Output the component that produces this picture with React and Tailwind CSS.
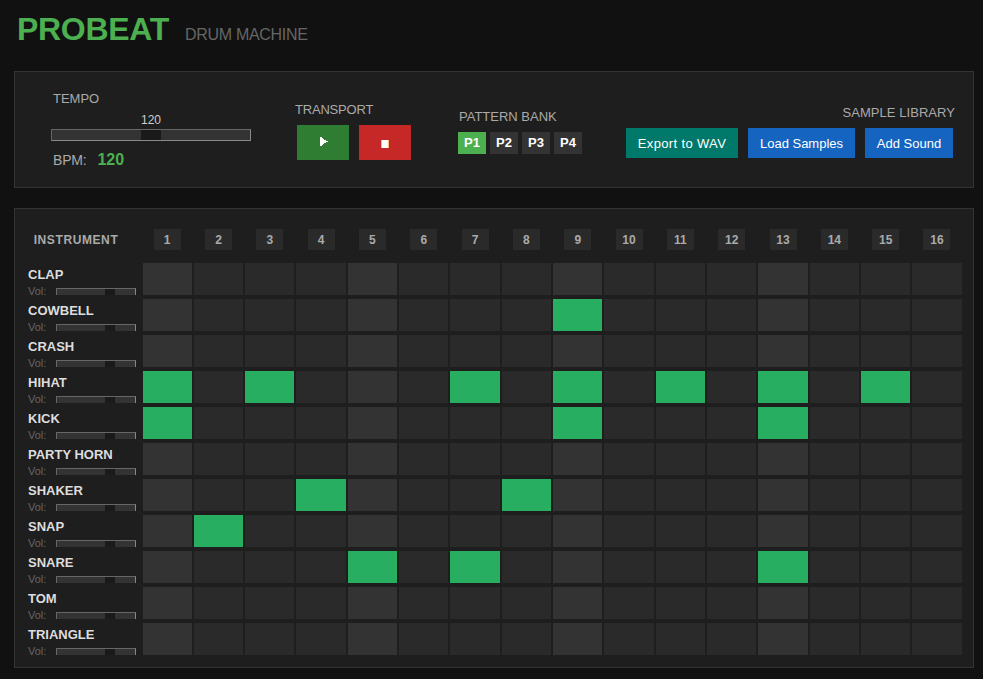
const rows = [
  ["CLAP", []],
  ["COWBELL", [9]],
  ["CRASH", []],
  ["HIHAT", [1, 3, 7, 9, 11, 13, 15]],
  ["KICK", [1, 9, 13]],
  ["PARTY HORN", []],
  ["SHAKER", [4, 8]],
  ["SNAP", [2]],
  ["SNARE", [5, 7, 13]],
  ["TOM", []],
  ["TRIANGLE", []],
];
const steps = Array.from({ length: 16 }, (_, i) => i + 1);

function Pad({ on, beat }) {
  const cls = on ? "bg-[#27ae60]" : beat ? "bg-[#333333]" : "bg-[#2a2a2a]";
  return <div className={`h-8 ${cls}`} />;
}

export default function App() {
  return (
    <div className="min-h-[679px] bg-[#111111] pl-[14px] font-['Liberation_Sans',Arial,sans-serif] overflow-hidden">
      <header className="flex h-[71px] items-baseline pt-[11px]">
        <h1 className="ml-[3px] text-[32px] leading-[37px] font-bold tracking-[-0.3px] text-[#4caf50]">PROBEAT</h1>
        <span className="ml-[16px] text-base tracking-[-0.3px] text-[#666666]">DRUM MACHINE</span>
      </header>

      <section className="flex h-[117px] w-[960px] items-center border border-[#333333] bg-[#1e1e1e] pl-[36px] pr-[20px]">
        <div className="w-[200px] shrink-0 pt-[4px]">
          <div className="ml-[2px] text-[13px] leading-[15px] text-[#aaaaaa]">TEMPO</div>
          <div className="mt-[7px] text-center text-xs leading-[14px] text-[#cccccc]">120</div>
          <div className="mt-[2px] flex h-3 border border-t-[#666666] border-l-[#666666] border-r-[#888888] border-b-[#888888] bg-[#333333] pl-[89px]">
            <div className="h-full w-5 bg-[#1a1a1a]" />
          </div>
          <div className="mt-[7px] ml-[2px] flex items-baseline">
            <span className="text-sm tracking-[-0.2px] text-[#aaaaaa]">BPM:</span>
            <span className="ml-[11px] text-base font-bold text-[#4caf50]">120</span>
          </div>
        </div>

        <div className="ml-[44px] shrink-0 pt-[3px]">
          <div className="text-[13px] leading-[15px] tracking-[-0.2px] text-[#aaaaaa]">TRANSPORT</div>
          <div className="ml-[2px] mt-[8px] flex gap-[10px]">
            <button className="flex h-[35px] w-[52px] items-center justify-center bg-[#2e7d32] text-white">
              <svg width="8" height="9" viewBox="0 0 8 9" shapeRendering="crispEdges" fill="currentColor" className="mb-[2px] ml-[1px]">
                <path d="M0 0h2v1h1v1h1v1h2v1h2v1H6v1H4v1H3v1H2v1H0z" />
              </svg>
            </button>
            <button className="flex h-[35px] w-[52px] items-center justify-center bg-[#c62828]">
              <span className="mt-[3px] block h-2 w-2 border-l border-r border-l-[#d8b0e8] border-r-[#f0c070] bg-white" />
            </button>
          </div>
        </div>

        <div className="ml-[47px] shrink-0 pt-[3px]">
          <div className="ml-[1px] text-[13px] leading-[15px] text-[#aaaaaa]">PATTERN BANK</div>
          <div className="mt-[8px] flex gap-1">
            {["P1", "P2", "P3", "P4"].map((p, i) => (
              <button key={p} className={`flex h-[22px] w-7 items-center justify-center text-[13px] font-bold text-white ${i === 0 ? "bg-[#4caf50]" : "bg-[#333333]"}`}>
                {p}
              </button>
            ))}
          </div>
        </div>

        <div className="ml-[44px] flex shrink-0 flex-col items-end pt-[3px]">
          <div className="mr-[-2px] text-[13px] leading-[15px] tracking-[0.05px] text-[#aaaaaa]">SAMPLE LIBRARY</div>
          <div className="mt-[8px] flex gap-[10px]">
            <button className="h-[30px] w-[112px] bg-[#00796b] pt-[2px] text-[13px] tracking-[0.35px] text-white">Export to WAV</button>
            <button className="h-[30px] w-[107px] bg-[#1565c0] pt-[2px] text-[13px] text-white">Load Samples</button>
            <button className="h-[30px] w-[88px] bg-[#1565c0] pt-[2px] text-[13px] text-white">Add Sound</button>
          </div>
        </div>
      </section>

      <section className="mt-5 h-[460px] w-[960px] border border-[#333333] bg-[#1e1e1e] pl-[13px] pr-[11.38px] pt-5">
        <div className="grid grid-cols-[112.5px_repeat(16,minmax(0,1fr))] gap-x-[2px] gap-y-1">
          <div className="mb-[9px] flex h-[21px] w-[96px] items-center justify-center text-xs font-bold tracking-[0.6px] text-[#aaaaaa]">INSTRUMENT</div>
          {steps.map((n) => (
            <div key={n} className="mb-[9px] flex h-[21px] justify-center">
              <div className="flex h-[21px] w-[27px] items-center justify-center bg-[#2a2a2a] text-xs font-bold text-[#aaaaaa]">{n}</div>
            </div>
          ))}
          {rows.map(([name, active]) => [
            <div key={name} className="h-8 pt-1">
              <div className="text-[13px] leading-[15px] font-bold text-[#dddddd]">{name}</div>
              <div className="mt-[3px] flex h-[10px] items-start">
                <span className="mt-[2px] text-[11px] leading-[8px] text-[#666666]">Vol:</span>
                <div className="ml-[10px] mt-[3px] h-[7px] w-20 overflow-hidden">
                  <div className="flex h-3 border border-t-[#666666] border-l-[#666666] border-r-[#888888] border-b-[#888888] bg-[#333333] pl-[48px]">
                    <div className="h-full w-[10px] bg-[#1a1a1a]" />
                  </div>
                </div>
              </div>
            </div>,
            ...steps.map((n) => <Pad key={`${name}-${n}`} on={active.includes(n)} beat={(n - 1) % 4 === 0} />),
          ])}
        </div>
      </section>
    </div>
  );
}
